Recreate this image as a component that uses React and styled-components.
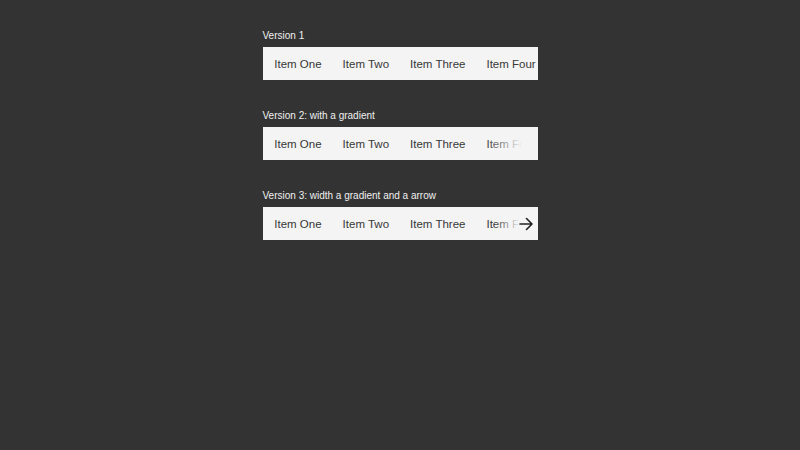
import React from 'react';
import styled, { createGlobalStyle } from 'styled-components';

const GlobalStyle = createGlobalStyle`
  html, body {
    margin: 0;
    padding: 0;
    background: #333333;
  }
  body {
    font-family: 'Liberation Sans', Arial, sans-serif;
  }
`;

const Page = styled.div`
  width: 275px;
  margin: 0 auto;
  padding-top: 30px;
`;

const Section = styled.section`
  margin-bottom: 30px;
`;

const Label = styled.div`
  color: #f0f0f0;
  font-size: 10px;
  line-height: 12px;
  margin-bottom: 5px;
`;

const Bar = styled.div`
  position: relative;
  background: #f4f4f4;
  height: 33px;
  overflow: hidden;
`;

const Nav = styled.nav`
  display: flex;
  white-space: nowrap;
  padding: 1.5px 0 0 1.3px;
`;

const Item = styled.a`
  flex: none;
  padding: 0 10.5px;
  line-height: 31.5px;
  font-size: 11.5px;
  color: #383838;
  text-decoration: none;
`;

/* fade over the right end of the bar */
const Fade = styled.div`
  position: absolute;
  top: 0;
  right: 0;
  bottom: 0;
  width: ${(p) => (p.$arrow ? 44 : 52)}px;
  background: linear-gradient(
    to right,
    rgba(244, 244, 244, 0) 0%,
    #f4f4f4 ${(p) => (p.$arrow ? 60 : 70)}%
  );
  pointer-events: none;
`;

const Arrow = styled.span`
  position: absolute;
  top: 50%;
  right: 4.5px;
  transform: translateY(-50%);
  display: flex;
  color: #222;
`;

const items = ['Item One', 'Item Two', 'Item Three', 'Item Four'];

function Menu({ fade, arrow }) {
  return (
    <Bar>
      <Nav>
        {items.map((it) => (
          <Item key={it} href="#">{it}</Item>
        ))}
      </Nav>
      {fade && <Fade $arrow={arrow} />}
      {arrow && (
        <Arrow>
          <svg width="14" height="14" viewBox="0 0 14 14" fill="none"
            stroke="currentColor" strokeWidth="1.6" strokeLinecap="round" strokeLinejoin="round">
            <path d="M1 7h12M7.5 1.5L13 7l-5.5 5.5" />
          </svg>
        </Arrow>
      )}
    </Bar>
  );
}

export default function App() {
  return (
    <>
      <GlobalStyle />
      <Page>
        <Section>
          <Label>Version 1</Label>
          <Menu />
        </Section>
        <Section>
          <Label>Version 2: with a gradient</Label>
          <Menu fade />
        </Section>
        <Section>
          <Label>Version 3: width a gradient and a arrow</Label>
          <Menu fade arrow />
        </Section>
      </Page>
    </>
  );
}
